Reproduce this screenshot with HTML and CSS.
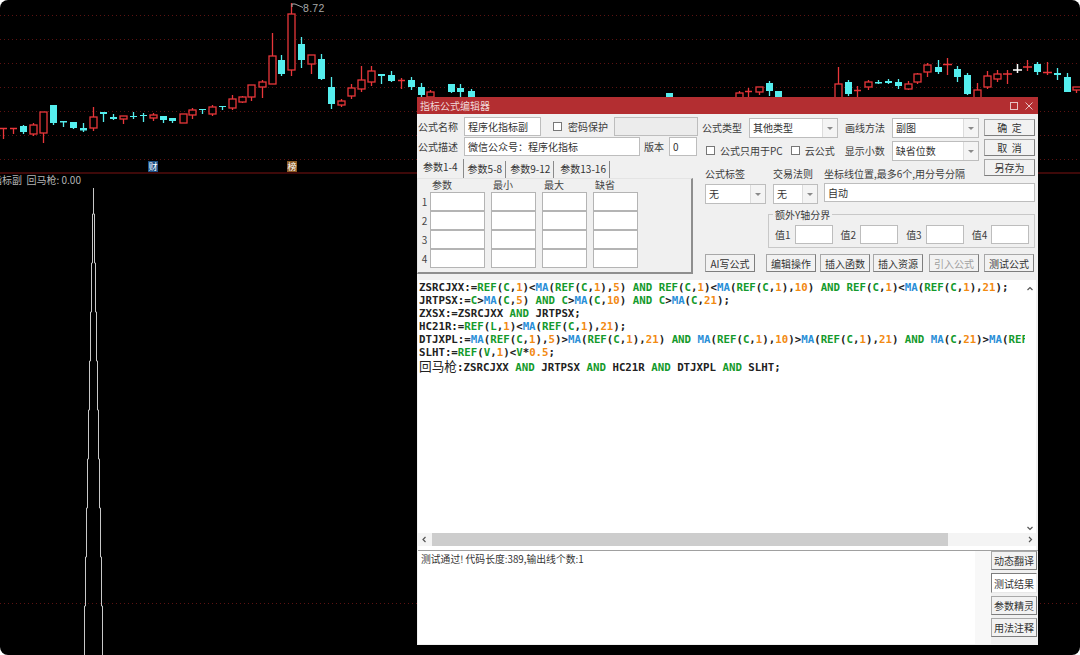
FILE: index.html
```html
<!DOCTYPE html>
<html lang="zh-CN">
<head>
    <meta charset="UTF-8">
    <meta name="viewport" content="width=device-width, initial-scale=1.0">
    <title>指标公式编辑器</title>
    <link rel="stylesheet" href="styles.css">
</head>
<body>
<div class="stage">
    <!-- K-line chart behind the dialog -->
    <svg class="chart" width="1080" height="655" viewBox="0 0 1080 655">
        <g class="grid">
            <path d="M0 15.5H1080M0 39.5H1080M0 63.5H1080M0 87.5H1080M0 111.5H1080M0 135.5H1080M0 159.5H1080M0 603.5H1080"/>
        </g>
        <path class="divider" d="M0 173H1080"/>
        <g class="up">
            <path d="M3.5 128V139M0 128.5H7"/>
            <path d="M13.5 128V134M10 128.5H17"/>
            <path d="M33.5 123V136"/><rect x="30" y="125" width="7" height="9"/>
            <path d="M43.5 112V143"/><rect x="40" y="112" width="7" height="21"/>
            <path d="M93.5 107V131"/><rect x="90" y="117" width="7" height="11"/>
            <path d="M123.5 116V124"/><rect x="120" y="116" width="7" height="3"/>
            <path d="M153.5 113V121"/><rect x="150" y="115" width="7" height="3"/>
            <path d="M183.5 114V123"/><rect x="180" y="114" width="7" height="9"/>
            <path d="M192.5 108V119"/><rect x="189" y="110" width="7" height="5"/>
            <path d="M212.5 105V116"/><rect x="209" y="107" width="7" height="7"/>
            <path d="M232.5 95V110"/><rect x="229" y="99" width="7" height="9"/>
            <path d="M242.5 96V103"/><rect x="239" y="97" width="7" height="5"/>
            <path d="M251.5 85V101"/><rect x="248" y="85" width="7" height="12"/>
            <path d="M262.5 80V98"/><rect x="259" y="82" width="7" height="5"/>
            <path d="M272.5 33V84"/><rect x="269" y="56" width="7" height="28"/>
            <path d="M291.5 3V76"/><rect x="288" y="14" width="7" height="56"/>
            <path d="M311.5 55V74"/><rect x="308" y="55" width="7" height="9"/>
            <path d="M341.5 99V107"/><rect x="338" y="101" width="7" height="4"/>
            <path d="M351.5 84V99"/><rect x="348" y="88" width="7" height="8"/>
            <path d="M361.5 66V92"/><rect x="358" y="80" width="7" height="9"/>
            <path d="M371.5 66V86"/><rect x="368" y="71" width="7" height="11"/>
            <path d="M401.5 78V89M398 80.5H405"/>
            <path d="M430.5 90V97"/><rect x="427" y="92" width="7" height="5"/>
            <path d="M739.5 91V97"/><rect x="736" y="93" width="7" height="6"/>
            <path d="M748.5 88V97M745 91.5H752"/>
            <path d="M759.5 87V95"/><rect x="756" y="87" width="7" height="5"/>
            <path d="M838.5 67V97"/><rect x="835" y="84" width="7" height="14"/>
            <path d="M857.5 86V97M854 90.5H861"/>
            <path d="M868.5 80V90"/><rect x="865" y="82" width="7" height="5"/>
            <path d="M908.5 81V90"/><rect x="905" y="84" width="7" height="5"/>
            <path d="M917.5 73V84"/><rect x="914" y="74" width="7" height="8"/>
            <path d="M927.5 63V77"/><rect x="924" y="65" width="7" height="7"/>
            <path d="M947.5 58V75M943 64.5H952"/>
            <path d="M977.5 83V97"/><rect x="974" y="90" width="7" height="8"/>
            <path d="M987.5 71V89"/><rect x="984" y="76" width="7" height="11"/>
            <path d="M997.5 70V82"/><rect x="994" y="74" width="7" height="5"/>
            <path d="M1007.5 70V84M1003 74H1012"/>
            <path d="M1027.5 60V71M1023 67H1032"/>
            <path d="M1047.5 62V75M1043 72.5H1052"/>
            <path d="M1076.5 87V93"/><rect x="1073" y="87" width="9" height="3"/>
        </g>
        <g class="down">
            <path d="M23.5 125V134"/><rect x="20" y="126" width="7" height="6"/>
            <path d="M53.5 105V125"/><rect x="50" y="105" width="7" height="18"/>
            <path d="M63.5 121V127"/><rect x="60" y="121" width="7" height="1.5"/>
            <path d="M73.5 122V129"/><rect x="70" y="122" width="7" height="6"/>
            <path d="M83.5 123V132"/><rect x="80" y="128" width="7" height="2.5"/>
            <path d="M103.5 112V122"/><rect x="100" y="112" width="7" height="2"/>
            <path d="M113.5 114V120"/><rect x="110" y="117" width="7" height="2"/>
            <path d="M133.5 112V119"/><rect x="130" y="116" width="7" height="1"/>
            <path d="M143.5 113V122"/><rect x="140" y="115" width="7" height="1"/>
            <path d="M163.5 116V123"/><rect x="160" y="116" width="7" height="4"/>
            <path d="M172.5 118V123"/><rect x="169" y="118" width="7" height="3"/>
            <path d="M202.5 109V114"/><rect x="199" y="109" width="7" height="1"/>
            <path d="M222.5 106V110"/><rect x="219" y="106" width="7" height="1"/>
            <path d="M281.5 55V76"/><rect x="278" y="60" width="7" height="14"/>
            <path d="M301.5 37V68"/><rect x="298" y="44" width="7" height="16"/>
            <path d="M321.5 54V80"/><rect x="318" y="59" width="7" height="20"/>
            <path d="M331.5 77V109"/><rect x="328" y="87" width="7" height="17"/>
            <path d="M381.5 74V84"/><rect x="378" y="74" width="7" height="2"/>
            <path d="M391.5 71V82"/><rect x="388" y="75" width="7" height="6"/>
            <path d="M411.5 77V90"/><rect x="408" y="80" width="7" height="7"/>
            <path d="M421.5 83V97"/><rect x="418" y="87" width="7" height="8"/>
            <path d="M451.5 84V93"/><rect x="448" y="84" width="7" height="8"/>
            <path d="M460.5 84V97"/><rect x="457" y="88" width="7" height="4"/>
            <path d="M471.5 89V97"/><rect x="468" y="91" width="7" height="6"/>
            <rect x="666" y="93" width="7" height="4"/>
            <path d="M769.5 81V96"/><rect x="766" y="83" width="7" height="8"/>
            <rect x="775" y="91" width="7" height="6"/>
            <path d="M848.5 80V96"/><rect x="845" y="82" width="7" height="12"/>
            <path d="M878.5 80V84"/><rect x="875" y="82" width="7" height="1.5"/>
            <path d="M888.5 79V84"/><rect x="885" y="81" width="7" height="2"/>
            <path d="M898.5 79V89"/><rect x="895" y="82" width="7" height="4"/>
            <path d="M938.5 60V74"/><rect x="935" y="67" width="7" height="5"/>
            <path d="M957.5 66V82"/><rect x="954" y="69" width="7" height="8"/>
            <path d="M967.5 73V95"/><rect x="964" y="75" width="7" height="19"/>
            <path d="M1037.5 62V75"/><rect x="1034" y="64" width="7" height="8"/>
            <path d="M1057.5 68V80"/><rect x="1054" y="73" width="7" height="2"/>
            <path d="M1067.5 73V92"/><rect x="1064" y="77" width="7" height="15"/>
        </g>
        <path class="flat" d="M1017.5 64V73M1013 70H1022"/>
        <path class="peak-mark" d="M292 7V4H295L303 7.5"/>
        <path class="spike" d="M84.5 655V606H85.5V557H86.5V508H87.5V459H88.5V410H89.5V361H90.5V312H91.5V263H92.5V214H93.5V188V214H94.5V263H95.5V312H96.5V361H97.5V410H98.5V459H99.5V508H100.5V557H101.5V606H102.5V655"/>
    </svg>

    <div class="peak-label">8.72</div>
    <div class="badge badge-cai">财</div>
    <div class="badge badge-bang">榜</div>
    <div class="pane-title">指标副 &nbsp;回马枪: 0.00</div>

    <!-- formula editor window -->
    <div class="dialog">
        <div class="titlebar">
            <span>指标公式编辑器</span>
            <div class="window-btns">
                <svg width="10" height="10" viewBox="0 0 10 10"><rect x="1.5" y="1.5" width="7" height="7"/></svg>
                <svg width="10" height="10" viewBox="0 0 10 10"><path d="M1.5 1.5L8.5 8.5M8.5 1.5L1.5 8.5"/></svg>
            </div>
        </div>

        <div class="form">
            <div class="form-left">
                <div class="row row-name">
                    <label class="lbl">公式名称</label>
                    <div class="input w-name">程序化指标副</div>
                    <span class="check"></span>
                    <label class="lbl">密码保护</label>
                    <div class="input w-pass disabled"></div>
                </div>
                <div class="row row-desc">
                    <label class="lbl">公式描述</label>
                    <div class="input w-desc">微信公众号：程序化指标</div>
                    <label class="lbl">版本</label>
                    <div class="input w-ver">0</div>
                </div>
                <div class="tabs">
                    <div class="tab active">参数1-4</div>
                    <div class="tab">参数5-8</div>
                    <div class="tab">参数9-12</div>
                    <div class="tab">参数13-16</div>
                </div>
                <div class="params">
                    <div class="params-grid">
                        <span></span><span class="th">参数</span><span class="th">最小</span><span class="th">最大</span><span class="th">缺省</span>
                        <span class="num">1</span><i></i><i></i><i></i><i></i>
                        <span class="num">2</span><i></i><i></i><i></i><i></i>
                        <span class="num">3</span><i></i><i></i><i></i><i></i>
                        <span class="num">4</span><i></i><i></i><i></i><i></i>
                    </div>
                </div>
            </div>

            <div class="form-right">
                <div class="top-block">
                    <div class="top-fields">
                        <div class="row row-type">
                            <label class="lbl">公式类型</label>
                            <div class="select w-type">其他类型<b></b></div>
                            <label class="lbl">画线方法</label>
                            <div class="select w-draw">副图<b></b></div>
                        </div>
                        <div class="row row-opts">
                            <span class="check"></span>
                            <label class="lbl">公式只用于PC</label>
                            <span class="check"></span>
                            <label class="lbl">云公式</label>
                            <label class="lbl lbl-dec">显示小数</label>
                            <div class="select w-draw">缺省位数<b></b></div>
                        </div>
                        <div class="row row-tag-labels">
                            <label class="lbl w-tag">公式标签</label>
                            <label class="lbl w-rule">交易法则</label>
                            <label class="lbl">坐标线位置,最多6个,用分号分隔</label>
                        </div>
                    </div>
                    <div class="top-btns">
                        <button class="btn">确 &nbsp;定</button>
                        <button class="btn">取 &nbsp;消</button>
                        <button class="btn">另存为</button>
                    </div>
                </div>
                <div class="row row-tags">
                    <div class="select w-tag">无<b></b></div>
                    <div class="select w-rule">无<b></b></div>
                    <div class="input w-axis">自动</div>
                </div>
                <fieldset class="extra">
                    <legend>额外Y轴分界</legend>
                    <label class="lbl">值1</label><div class="input"></div>
                    <label class="lbl">值2</label><div class="input"></div>
                    <label class="lbl">值3</label><div class="input"></div>
                    <label class="lbl">值4</label><div class="input"></div>
                </fieldset>
                <div class="row row-actions">
                    <button class="btn ai">AI写公式</button>
                    <button class="btn">编辑操作</button>
                    <button class="btn">插入函数</button>
                    <button class="btn">插入资源</button>
                    <button class="btn off">引入公式</button>
                    <button class="btn">测试公式</button>
                </div>
            </div>
        </div>

        <div class="editor">
            <div class="code-wrap">
<pre class="code">ZSRCJXX:=<em>REF</em>(<em>C</em>,<u>1</u>)&lt;<s>MA</s>(<em>REF</em>(<em>C</em>,<u>1</u>),<u>5</u>) <em>AND</em> <em>REF</em>(<em>C</em>,<u>1</u>)&lt;<s>MA</s>(<em>REF</em>(<em>C</em>,<u>1</u>),<u>10</u>) <em>AND</em> <em>REF</em>(<em>C</em>,<u>1</u>)&lt;<s>MA</s>(<em>REF</em>(<em>C</em>,<u>1</u>),<u>21</u>);
JRTPSX:=<em>C</em>&gt;<s>MA</s>(<em>C</em>,<u>5</u>) <em>AND</em> <em>C</em>&gt;<s>MA</s>(<em>C</em>,<u>10</u>) <em>AND</em> <em>C</em>&gt;<s>MA</s>(<em>C</em>,<u>21</u>);
ZXSX:=ZSRCJXX <em>AND</em> JRTPSX;
HC21R:=<em>REF</em>(<em>L</em>,<u>1</u>)&lt;<s>MA</s>(<em>REF</em>(<em>C</em>,<u>1</u>),<u>21</u>);
DTJXPL:=<s>MA</s>(<em>REF</em>(<em>C</em>,<u>1</u>),<u>5</u>)&gt;<s>MA</s>(<em>REF</em>(<em>C</em>,<u>1</u>),<u>21</u>) <em>AND</em> <s>MA</s>(<em>REF</em>(<em>C</em>,<u>1</u>),<u>10</u>)&gt;<s>MA</s>(<em>REF</em>(<em>C</em>,<u>1</u>),<u>21</u>) <em>AND</em> <s>MA</s>(<em>C</em>,<u>21</u>)&gt;<s>MA</s>(<em>REF</em>
SLHT:=<em>REF</em>(<em>V</em>,<u>1</u>)&lt;<em>V</em>*<u>0.5</u>;
<span class="cjk">回马枪</span>:ZSRCJXX <em>AND</em> JRTPSX <em>AND</em> HC21R <em>AND</em> DTJXPL <em>AND</em> SLHT;</pre>
                <div class="vscroll">
                    <svg width="10" height="10" viewBox="0 0 10 10"><path d="M2.5 6L5 3.5L7.5 6"/></svg>
                    <svg width="10" height="10" viewBox="0 0 10 10"><path d="M2.5 4L5 6.5L7.5 4"/></svg>
                </div>
            </div>
            <div class="hscroll">
                <svg width="12" height="13" viewBox="0 0 12 13"><path d="M7.5 4L5 6.5L7.5 9"/></svg>
                <div class="hscroll-track"><div class="hscroll-thumb"></div></div>
                <svg width="12" height="13" viewBox="0 0 12 13"><path d="M5 4L7.5 6.5L5 9"/></svg>
            </div>
        </div>

        <div class="output">
            <div class="result">测试通过! 代码长度:389,输出线个数:1</div>
            <div class="side-btns">
                <button class="btn">动态翻译</button>
                <button class="btn pressed">测试结果</button>
                <button class="btn">参数精灵</button>
                <button class="btn">用法注释</button>
            </div>
        </div>
    </div>
</div>
</body>
</html>
```

FILE: styles.css
```css
/* Page */
html, body {
    margin: 0;
    padding: 0;
    background: #ffffff;
}

.stage {
    position: relative;
    width: 1080px;
    height: 655px;
    background: #000000;
    border-radius: 8px;
    overflow: hidden;
    font-family: "Noto Sans CJK SC", "Liberation Sans", sans-serif;
    font-size: 10px;
    color: #333333;
}

/* Chart */
.chart {
    position: absolute;
    left: 0;
    top: 0;
}

.grid path {
    fill: none;
    stroke: #5c1212;
    stroke-width: 1;
    stroke-dasharray: 1 3;
}

.divider {
    stroke: #7c1313;
    stroke-width: 1.2;
}

.up path, .up rect {
    stroke: #e8363a;
    stroke-width: 1.3;
}

.up rect {
    fill: #000000;
}

.down path {
    stroke: #55eeee;
    stroke-width: 1.3;
}

.down rect {
    fill: #55eeee;
}

.flat {
    stroke: #ffffff;
    stroke-width: 1.5;
}

.peak-mark {
    fill: none;
    stroke: #a8a8a8;
    stroke-width: 1;
}

.spike {
    fill: none;
    stroke: #c8c8c8;
    stroke-width: 1;
}

.peak-label {
    position: absolute;
    left: 303px;
    top: 2px;
    font: 10.5px "Liberation Sans", sans-serif;
    letter-spacing: 0.3px;
    color: #a8a8a8;
}

.badge {
    position: absolute;
    top: 161px;
    width: 10px;
    height: 11px;
    line-height: 11px;
    text-align: center;
    font-size: 9px;
    color: #ffffff;
}

.badge-cai {
    left: 148px;
    background: #1b4f86;
}

.badge-bang {
    left: 287px;
    background: #8a5a24;
}

.pane-title {
    position: absolute;
    left: -8px;
    top: 172px;
    font-size: 10px;
    line-height: 15px;
    white-space: nowrap;
    color: #b4b4b4;
}

/* Dialog */
.dialog {
    position: absolute;
    left: 417px;
    top: 97px;
    width: 621px;
    height: 548px;
    display: flex;
    flex-direction: column;
    background: #f0f0f0;
}

.titlebar {
    height: 17px;
    display: flex;
    align-items: center;
    justify-content: space-between;
    padding: 0 4px 0 3px;
    background: #b32e31;
    color: #f0d8d8;
}

.window-btns {
    display: flex;
    gap: 5px;
}

.window-btns svg {
    fill: none;
    stroke: #e8c4c4;
    stroke-width: 1;
}

.form {
    display: flex;
    height: 166px;
}

.form-left {
    width: 281px;
    padding: 3px 0 0 1px;
    box-sizing: border-box;
}

.form-right {
    flex: 1;
    padding: 3px 0 0 4px;
}

.row {
    display: flex;
    align-items: center;
}

.lbl {
    white-space: nowrap;
    color: #3c3c3c;
}

.input, .select {
    position: relative;
    box-sizing: border-box;
    height: 19px;
    line-height: 17px;
    padding-left: 3px;
    background: #ffffff;
    border: 1px solid #bdbdbd;
    color: #333333;
    white-space: nowrap;
}

.input.disabled {
    background: #ececec;
}

.select b {
    position: absolute;
    right: 0;
    top: 0;
    bottom: 0;
    width: 14px;
    background: #f4f4f4;
    border-left: 1px solid #dcdcdc;
}

.select b::after {
    content: "";
    position: absolute;
    left: 4px;
    top: 8px;
    border: 3px solid transparent;
    border-top: 3px solid #8a8a8a;
    border-bottom: 0;
}

.check {
    flex: none;
    box-sizing: border-box;
    width: 9px;
    height: 9px;
    background: #ffffff;
    border: 1px solid #777777;
}

.btn {
    box-sizing: border-box;
    padding: 0;
    font: inherit;
    color: #333333;
    background: #f2f2f2;
    border: 1px solid #a8a8a8;
    border-right-color: #7e7e7e;
    border-bottom-color: #7e7e7e;
    white-space: nowrap;
}

/* Left column */
.row-name {
    height: 19px;
}

.row-name .lbl:first-child,
.row-desc .lbl:first-child {
    width: 46px;
}

.w-name {
    width: 77px;
}

.row-name .check {
    margin: 0 6px 0 12px;
}

.w-pass {
    width: 84px;
    margin-left: 6px;
}

.row-desc {
    height: 19px;
    margin-top: 1px;
}

.w-desc {
    width: 176px;
    margin-right: 4px;
}

.w-ver {
    width: 28px;
    margin-left: 5px;
}

.tabs {
    display: flex;
    height: 19px;
    margin-top: 3px;
    align-items: flex-end;
}

.tab {
    box-sizing: border-box;
    height: 17px;
    line-height: 15px;
    padding: 0 3px 0 4px;
    border-right: 1px solid #8a8a8a;
    white-space: nowrap;
}

.tab.active {
    height: 19px;
    padding: 0 5px;
    background: #f0f0f0;
}

.tab:last-child {
    padding-left: 6px;
}

.params {
    box-sizing: border-box;
    width: 276px;
    height: 96px;
    margin-left: -1px;
    border: 1px solid #e4e4e4;
    border-right: 2px solid #8e8e8e;
    border-bottom: 2px solid #8e8e8e;
}

.params-grid {
    display: grid;
    grid-template-columns: 11px 61px 51px 51px 51px;
    grid-template-rows: 13px repeat(4, 19px);
    padding-left: 1px;
}

.params-grid i {
    box-sizing: border-box;
    margin-right: 6px;
    background: #ffffff;
    border: 1px solid #b4b4b4;
}

.th {
    padding-left: 2px;
    line-height: 11px;
    color: #444444;
}

.num {
    text-align: center;
    line-height: 19px;
    color: #444444;
}

/* Right column */
.top-block {
    display: flex;
    justify-content: space-between;
}

.row-type {
    height: 21px;
}

.row-type .lbl:first-child {
    margin-right: 7px;
}

.w-type {
    width: 89px;
    height: 20px;
    margin-right: 7px;
}

.w-draw {
    width: 87px;
    height: 20px;
    margin-left: 7px;
}

.row-opts {
    height: 21px;
    margin-top: 2px;
}

.row-opts .check:first-child {
    margin-left: 4px;
}

.row-opts .lbl {
    margin-left: 5px;
}

.row-opts .check:nth-child(3) {
    margin-left: 8px;
}

.row-opts .lbl-dec {
    margin-left: 10px;
}

.top-btns {
    display: flex;
    flex-direction: column;
    gap: 3px;
    margin-right: 3px;
    padding-top: 2px;
}

.top-btns .btn {
    width: 51px;
    height: 17px;
}

.row-tag-labels {
    height: 16px;
    margin-top: 4px;
    margin-left: 3px;
}

.row-tags {
    margin-top: 2px;
    margin-left: 3px;
    align-items: flex-start;
}

.lbl.w-tag {
    width: 68px;
}

.lbl.w-rule {
    width: 51px;
}

.select.w-tag {
    width: 61px;
    height: 20px;
    margin-top: 1px;
    margin-right: 7px;
}

.select.w-rule {
    width: 45px;
    height: 20px;
    margin-top: 1px;
    margin-right: 6px;
}

.w-axis {
    width: 211px;
}

.extra {
    box-sizing: border-box;
    display: flex;
    align-items: center;
    width: 266px;
    height: 41px;
    margin: 3px 0 0 66px;
    padding: 0 5px 0 6px;
    border: 1px solid #c8c8c8;
}

.extra legend {
    padding: 0 2px;
    margin-left: -2px;
    color: #3c3c3c;
}

.extra .input {
    width: 38px;
    margin: 0 8px 0 4px;
}

.extra .input:last-child {
    margin-right: 0;
}

.row-actions {
    margin: 6px 0 0 3px;
}

.row-actions .btn {
    width: 50px;
    height: 18px;
    margin-right: 4px;
}

.row-actions .ai {
    margin-right: 11px;
}

.row-actions .btn:nth-child(3) {
    margin-right: 3px;
}

.row-actions .btn:nth-child(4) {
    margin-right: 6px;
}

.row-actions .off {
    margin-right: 5px;
    color: #a0a0a0;
}

/* Code editor */
.editor {
    box-sizing: border-box;
    height: 270px;
    margin-left: 1px;
    margin-right: 2px;
    background: #ffffff;
    display: flex;
    flex-direction: column;
}

.code-wrap {
    flex: 1;
    display: flex;
    min-height: 0;
}

.code {
    flex: 1;
    min-width: 0;
    margin: 0;
    padding: 2px 0 0 1px;
    overflow: hidden;
    font-family: "DejaVu Sans Mono", "Noto Sans CJK SC", monospace;
    font-size: 10.75px;
    font-weight: bold;
    line-height: 12.95px;
    color: #222222;
}

.code em {
    font-style: normal;
    color: #149a2c;
}

.code u {
    text-decoration: none;
    color: #f28a12;
}

.code s {
    text-decoration: none;
    color: #2a8fd8;
}

.cjk {
    font-family: "Noto Sans CJK SC", sans-serif;
    font-size: 12.7px;
    font-weight: normal;
}

.vscroll {
    width: 11px;
    display: flex;
    flex-direction: column;
    justify-content: space-between;
    background: #ffffff;
    padding-top: 4px;
}

.vscroll svg, .hscroll svg {
    fill: none;
    stroke: #555555;
    stroke-width: 1.2;
    flex: none;
}

.hscroll {
    height: 13px;
    display: flex;
    align-items: center;
    margin-bottom: 4px;
    background: #f4f4f4;
}

.hscroll-track {
    flex: 1;
    height: 13px;
}

.hscroll-thumb {
    width: 516px;
    height: 13px;
    margin-left: 2px;
    background: #cdcdcd;
}

/* Result area */
.output {
    display: flex;
    flex: 1;
    min-height: 0;
    margin-left: 1px;
    border-top: 1px solid #a0a0a0;
}

.result {
    width: 557px;
    box-sizing: border-box;
    padding: 2px 0 0 3px;
    margin-right: 16px;
    margin-bottom: 1px;
    background: #ffffff;
    font-size: 9.8px;
    line-height: 13px;
    box-shadow: 16px 0 0 #f8f8f8;
}

.side-btns {
    display: flex;
    flex-direction: column;
    width: 46px;
}

.side-btns .btn {
    height: 19px;
    margin-bottom: 3px;
}

.side-btns .pressed {
    height: 20px;
    background: #ffffff;
    border-color: #7e7e7e #e8e8e8 #e8e8e8 #7e7e7e;
}
```
